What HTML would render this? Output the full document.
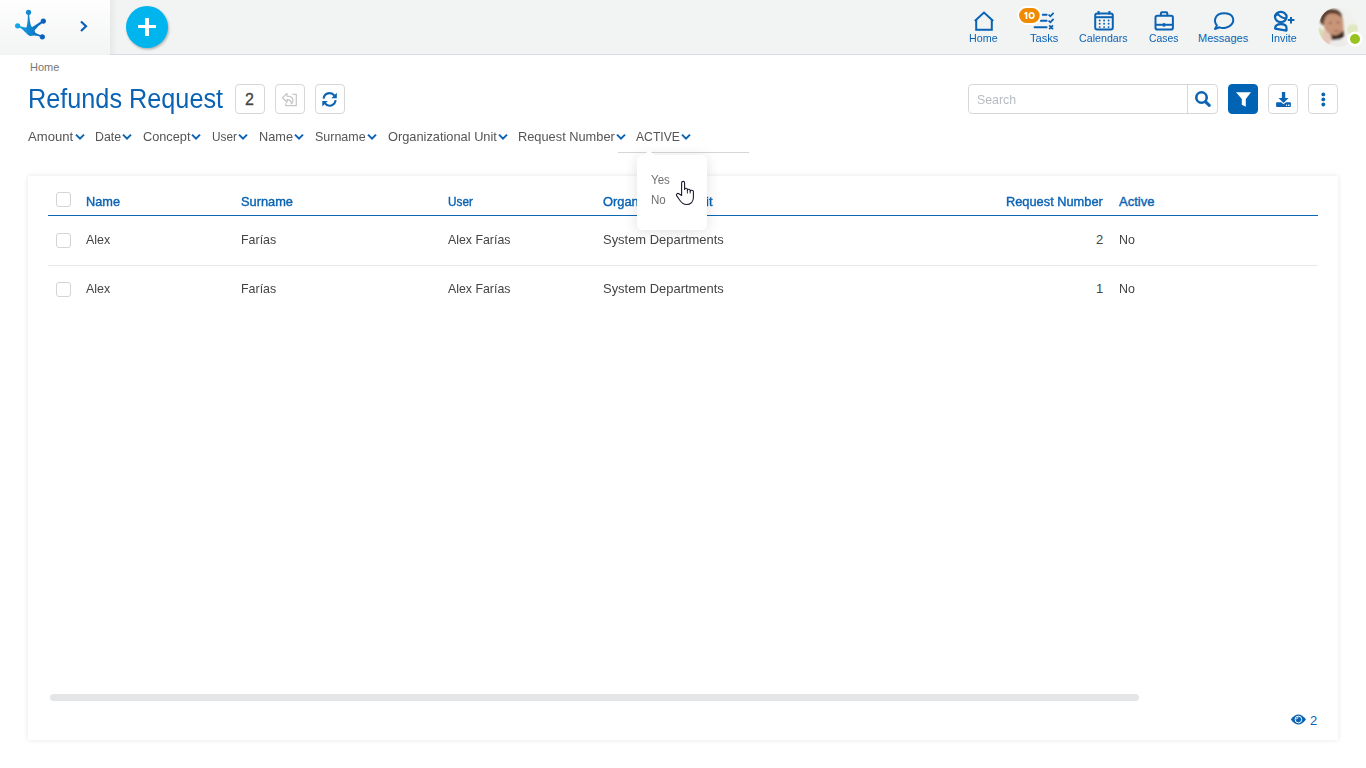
<!DOCTYPE html>
<html><head><meta charset="utf-8">
<style>
*{box-sizing:border-box;margin:0;padding:0}
html,body{width:1366px;height:768px;overflow:hidden;background:#fff;font-family:"Liberation Sans",sans-serif;color:#444}
.a{position:absolute;white-space:nowrap;line-height:1}
.s{display:inline-block;transform-origin:0 0}
#hdr{position:absolute;left:0;top:0;width:1366px;height:55px;background:#f2f3f3;border-bottom:1px solid #d8dce2}
#lp{position:absolute;left:0;top:0;width:110px;height:55px;background:linear-gradient(#fefefe,#f3f4f4)}
#lsh{position:absolute;left:110px;top:0;width:8px;height:54px;background:linear-gradient(to right,rgba(0,0,0,.045),rgba(0,0,0,0))}
#plus{position:absolute;left:126px;top:6px;width:42px;height:42px;border-radius:50%;background:#00b5ee;box-shadow:1px 1.5px 2.5px rgba(0,0,0,.28)}
.nl{font-size:11px;color:#0b63b4;top:33px}
.crumb{left:30px;top:62px;font-size:11px;color:#777}
.title{left:28px;top:86px;font-size:27px;color:#0b63b4}
.box{position:absolute;top:84px;width:30px;height:30px;border:1px solid #d6d7d9;border-radius:4px;background:#fff}
.f{top:130px;font-size:13px;color:#555}
.card{position:absolute;left:28px;top:176px;width:1310px;height:564px;background:#fff;box-shadow:0 0 5px rgba(0,0,0,.10)}
.th{top:195px;font-size:13px;color:#0b63b4;-webkit-text-stroke:.4px #0b63b4}
.td{font-size:13px;color:#444}
.cb{position:absolute;left:56px;width:15px;height:15px;border:1px solid #d3d4d6;border-radius:3px;background:#fff}
svg{position:absolute;left:0;top:0;overflow:visible}
</style></head><body>
<div id="hdr"></div>
<div id="lp"></div><div id="lsh"></div>
<div id="plus"></div>
<div style="position:absolute;left:138px;top:25px;width:18px;height:3px;background:#fff"></div>
<div style="position:absolute;left:145px;top:18px;width:4px;height:18px;background:#fff"></div>

<!-- header icons -->
<svg width="1366" height="55" viewBox="0 0 1366 55">
 <defs>
  <linearGradient id="lg" x1="16" y1="0" x2="45" y2="0" gradientUnits="userSpaceOnUse">
   <stop offset="0" stop-color="#15aae8"/><stop offset="1" stop-color="#0a5db6"/>
  </linearGradient>
 </defs>
 <g fill="url(#lg)" stroke="url(#lg)" stroke-linecap="round">
  <circle cx="28.5" cy="12.3" r="2.6" stroke="none"/>
  <circle cx="17.6" cy="25.8" r="2.6" stroke="none"/>
  <circle cx="43.3" cy="21.1" r="2.6" stroke="none"/>
  <circle cx="42.3" cy="36.8" r="2.6" stroke="none"/>
  <path d="M27.8 13 L29.2 13 Q29.4 22 31.5 27 L26.6 27 Q28 22 27.8 13Z" stroke="none"/>
  <path d="M17.4 24.9 Q22 27 26.5 27.8 L25 32 Q21 27.5 17.6 26.7Z" stroke="none"/>
  <path d="M42.8 20.2 L43.8 21.9 Q38 25.5 35 30 L31.5 27.5 Q37 24 42.8 20.2Z" stroke="none"/>
  <path d="M42.9 36 L41.7 37.6 Q38 35.2 33 35.5 L34.5 32.3 Q37.5 34.5 42.9 36Z" stroke="none"/>
  <path d="M23.6 29.6 Q26.5 27 29 25.8 Q32 26.5 34.8 28.7 Q34.2 31.2 35.6 34 Q33 36.2 30 35.9 Q26.2 34.6 23.6 29.6Z" stroke="none"/>
 </g>
 <polyline points="81,21.5 86,26.3 81,31" fill="none" stroke="#0b5fb8" stroke-width="2.2"/>

 <g fill="none" stroke="#0b63b4" stroke-width="2">
  <!-- home -->
  <polyline points="974.8,21 984,12.6 993.2,21" stroke-linejoin="miter"/>
  <path d="M976.2 20 V29.8 H991.8 V20"/>
  <!-- tasks -->
  <path d="M1042.6 14.8 H1046.6 M1040.6 20.8 H1046.6 M1034.6 27.3 H1046.6" stroke-linecap="round"/>
  <path d="M1048.6 14.6 L1050.4 16.3 L1053.6 12.8 M1048.6 20.6 L1050.4 22.3 L1053.6 18.8" stroke-width="1.8"/>
  <path d="M1049.2 25.3 L1053 29.1 M1053 25.3 L1049.2 29.1" stroke-width="1.8"/>
  <!-- calendar -->
  <rect x="1095.2" y="13.4" width="17.6" height="16.2" rx="2"/>
  <path d="M1095 17.2 H1113"/>
  <path d="M1098.6 11 V14.5 M1109.4 11 V14.5"/>
  <!-- cases -->
  <rect x="1155.5" y="15.8" width="17.4" height="13.8" rx="1.8"/>
  <path d="M1160.9 15.5 V13.3 Q1160.9 12.2 1162 12.2 H1166.2 Q1167.3 12.2 1167.3 13.3 V15.5"/>
  <path d="M1155 24.8 H1173"/>
  <!-- messages -->
  <path d="M1216.9 25.4 C1213.5 21.5 1214.3 13.3 1224.2 13.3 C1234 13.3 1235 21 1231 25 C1228.5 27.6 1223 28.8 1219.5 27.3 L1215 29 Z" stroke-linejoin="round"/>
  <!-- invite -->
  <ellipse cx="1280.8" cy="17" rx="5.8" ry="5.1" stroke-width="2.2"/>
  <path d="M1277.3 12.8 Q1279.2 17.2 1286.4 18.6" stroke-width="2"/>
  <path d="M1275 14.2 Q1276.5 12.5 1278 12.5 L1279 15.2 Q1276.5 15.5 1275.5 17 Z" fill="#0b63b4" stroke="none"/>
  <path d="M1275.1 28.6 C1275.1 25.3 1277.6 24.2 1281 24.2 C1284.5 24.2 1286.5 25.4 1286.5 28 V30.6 Z" stroke-width="2.2" stroke-linejoin="round"/>
  <path d="M1287.8 20 H1294.4 M1291 16.9 V23.6"/>
 </g>
 <g fill="#0b63b4">
  <circle cx="1099.7" cy="20.5" r="0.95"/><circle cx="1104.1" cy="20.5" r="0.95"/><circle cx="1108.6" cy="20.5" r="0.95"/>
  <circle cx="1099.7" cy="23.8" r="0.95"/><circle cx="1104.1" cy="23.8" r="0.95"/><circle cx="1108.6" cy="23.8" r="0.95"/>
  <circle cx="1099.7" cy="27.1" r="0.95"/><circle cx="1104.1" cy="27.1" r="0.95"/><circle cx="1108.6" cy="27.1" r="0.95"/>
  <rect x="1162.8" y="23.2" width="2.4" height="3.4"/>
  <path d="M1275 29 C1275 24.5 1286.5 24.5 1286.5 28 V30.5Z" fill="none"/>
 </g>
 <!-- badge -->
 <rect x="1018.1" y="7.1" width="22.6" height="16.8" rx="8.4" fill="#f08a00" stroke="#fff" stroke-width="2"/>
 <!-- avatar -->
 <defs>
  <clipPath id="avc"><circle cx="1338.2" cy="27" r="19.8"/></clipPath>
  <filter id="bl" x="-20%" y="-20%" width="140%" height="140%"><feGaussianBlur stdDeviation="1"/></filter>
 </defs>
 <g clip-path="url(#avc)">
  <rect x="1316" y="5" width="45" height="45" fill="#f1f2ef"/>
  <g filter="url(#bl)">
   <ellipse cx="1353" cy="30" rx="6" ry="6" fill="#dfe8bf"/>
   <ellipse cx="1320" cy="35" rx="4" ry="7" fill="#d5e2b0"/>
   <path d="M1320 22 Q1320 9 1332 9 Q1341 9 1342 17 L1343 22 Q1338 15 1330 16 Q1325 17 1323.5 26 Z" fill="#5a3e2e"/>
   <path d="M1324 22 Q1325 13 1333 13.5 Q1341 14 1343 21 Q1344.5 30 1342 35 Q1337 39 1331 37 Q1325 33 1324 26Z" fill="#c99579"/>
   <path d="M1327.5 31 Q1331 36 1337 35 Q1341 33.5 1343.5 30 L1344 36 Q1340 41 1334 41 Q1329 39.5 1327 35Z" fill="#3a2a22"/>
   <ellipse cx="1336.5" cy="31" rx="3" ry="1.3" fill="#b07a66"/>
   <path d="M1322 31 Q1327 29 1331 35 L1333 45 Q1327 47 1323 42Z" fill="#e6c6b7"/>
   <path d="M1330 41 Q1338 38 1346 40 L1349 48 L1330 48Z" fill="#ecebea"/>
   <circle cx="1330.5" cy="23" r="1" fill="#5a4035"/><circle cx="1338" cy="22.5" r="1" fill="#5a4035"/>
  </g>
 </g>
 <circle cx="1355" cy="39" r="7.6" fill="#fff"/>
 <circle cx="1355" cy="39" r="5" fill="#97c21f"/>
</svg>
<svg width="1366" height="55"><g fill="none" stroke="#fff" stroke-width="1.7"><path d="M1026.5 12.1 V19"/><path d="M1024.3 14 L1026.6 12.4" stroke-width="1.3"/><ellipse cx="1031.6" cy="15.5" rx="2.25" ry="2.75"/></g></svg>

<div class="a nl" style="left:969px"><span class="s" style="transform:scaleX(.976)">Home</span></div>
<div class="a nl" style="left:1030px"><span class="s" style="transform:scaleX(1.01)">Tasks</span></div>
<div class="a nl" style="left:1079px"><span class="s" style="transform:scaleX(.97)">Calendars</span></div>
<div class="a nl" style="left:1149px"><span class="s" style="transform:scaleX(.945)">Cases</span></div>
<div class="a nl" style="left:1198px"><span class="s" style="transform:scaleX(1.0)">Messages</span></div>
<div class="a nl" style="left:1271px"><span class="s" style="transform:scaleX(.98)">Invite</span></div>

<div class="a crumb">Home</div>
<div class="a title"><span class="s" style="transform:scaleX(.935)">Refunds Request</span></div>
<div class="box" style="left:235px"></div>
<div class="box" style="left:275px"></div>
<div class="box" style="left:315px"></div>
<div class="a" style="left:245px;top:92px;font-size:16px;color:#444;-webkit-text-stroke:.3px #444">2</div>

<!-- search -->
<div class="box" style="left:968px;width:250px;border-radius:4px"></div>
<div style="position:absolute;left:1187px;top:85px;width:1px;height:28px;background:#d6d7d9"></div>
<div class="a" style="left:977px;top:93px;font-size:13px;color:#b8bcc2"><span class="s" style="transform:scaleX(.95)">Search</span></div>
<div class="box" style="left:1228px;background:#0063b4;border-color:#0063b4"></div>
<div class="box" style="left:1268px"></div>
<div class="box" style="left:1308px"></div>

<svg width="1366" height="768">
 <g fill="none" stroke="#0b63b4" stroke-width="2.2">
  <circle cx="1201.5" cy="97.5" r="5.2" stroke-width="2.6"/>
  <path d="M1205.6 101.8 L1209.3 105.3" stroke-width="3.1" stroke-linecap="round"/>
 </g>
 <path d="M1236 92.2 H1251 L1245.8 99 V106.7 L1241.8 104.8 V99 Z" fill="#fff"/>
 <g fill="#0b63b4">
  <path d="M1281.9 92 H1285.2 V98.1 H1288.6 L1283.55 103.1 L1278.5 98.1 H1281.9 Z"/>
  <path d="M1277 102.2 H1281.1 L1283.55 104.3 L1286 102.2 H1290 Q1290.9 102.2 1290.9 103.1 V106 Q1290.9 106.9 1290 106.9 H1277 Q1276.1 106.9 1276.1 106 V103.1 Q1276.1 102.2 1277 102.2 Z"/>
  <circle cx="1323.3" cy="94.4" r="1.9"/><circle cx="1323.3" cy="99.4" r="1.9"/><circle cx="1323.3" cy="104.5" r="1.9"/>
 </g>
 <circle cx="1286.5" cy="105.3" r=".7" fill="#fff"/><ellipse cx="1288.8" cy="105.3" rx=".95" ry=".7" fill="#fff"/>
 <!-- reply icon disabled -->
 <g fill="none" stroke="#c6c7c9" stroke-width="1.25" stroke-linejoin="round">
  <path d="M282.4 97.8 L287 93.4 V96.2 C290.5 96.2 293 97.5 293 100.5 C293 102 292.3 103 291.3 103.8 C291.6 101.2 290 99.7 287 99.7 V102.3 Z"/>
  <path d="M292.3 94.3 H296.3 V105.5 H285.8 V103.3"/>
 </g>
 <!-- refresh -->
 <g fill="none" stroke="#0b63b4" stroke-width="2.1">
  <path d="M323.6 98.6 A6 6 0 0 1 334.4 95.6"/>
  <path d="M335.6 100.2 A6 6 0 0 1 324.8 103.2"/>
 </g>
 <g fill="#0b63b4">
  <path d="M336.8 92.8 V98.3 H331.3Z"/>
  <path d="M322.3 106.4 V100.9 H327.8Z"/>
 </g>
</svg>

<!-- filters -->
<div class="a f" style="left:28px"><span class="s" style="transform:scaleX(1.01)">Amount</span></div>
<div class="a f" style="left:95px"><span class="s" style="transform:scaleX(.95)">Date</span></div>
<div class="a f" style="left:143px"><span class="s" style="transform:scaleX(.98)">Concept</span></div>
<div class="a f" style="left:212px"><span class="s" style="transform:scaleX(.91)">User</span></div>
<div class="a f" style="left:259px"><span class="s" style="transform:scaleX(.98)">Name</span></div>
<div class="a f" style="left:315px"><span class="s" style="transform:scaleX(.96)">Surname</span></div>
<div class="a f" style="left:388px"><span class="s" style="transform:scaleX(.985)">Organizational Unit</span></div>
<div class="a f" style="left:518px"><span class="s" style="transform:scaleX(.985)">Request Number</span></div>
<div class="a f" style="left:636px"><span class="s" style="transform:scaleX(.935)">ACTIVE</span></div>
<svg width="1366" height="768">
 <g fill="none" stroke="#0b63b4" stroke-width="2">
  <polyline points="76,134.6 80,138.6 84,134.6"/>
  <polyline points="123,134.6 127,138.6 131,134.6"/>
  <polyline points="192,134.6 196,138.6 200,134.6"/>
  <polyline points="239,134.6 243,138.6 247,134.6"/>
  <polyline points="295,134.6 299,138.6 303,134.6"/>
  <polyline points="368,134.6 372,138.6 376,134.6"/>
  <polyline points="499,134.6 503,138.6 507,134.6"/>
  <polyline points="617,134.6 621,138.6 625,134.6"/>
  <polyline points="682,134.6 686,138.6 690,134.6"/>
 </g>
</svg>
<div style="position:absolute;left:618px;top:152px;width:131px;height:1px;background:#d5d6d8"></div>

<div class="card"></div>
<div style="position:absolute;left:48px;top:215px;width:1270px;height:1px;background:#0b66b4"></div>
<div style="position:absolute;left:48px;top:265px;width:1270px;height:1px;background:#e8e8e8"></div>
<div class="cb" style="top:192px"></div>
<div class="cb" style="top:233px"></div>
<div class="cb" style="top:282px"></div>
<div class="a th" style="left:86px"><span class="s" style="transform:scaleX(.98)">Name</span></div>
<div class="a th" style="left:241px"><span class="s" style="transform:scaleX(.985)">Surname</span></div>
<div class="a th" style="left:448px"><span class="s" style="transform:scaleX(.905)">User</span></div>
<div class="a th" style="left:603px"><span class="s" style="transform:scaleX(.99)">Organizational Unit</span></div>
<div class="a th" style="left:1006px"><span class="s" style="transform:scaleX(.985)">Request Number</span></div>
<div class="a th" style="left:1119px"><span class="s" style="transform:scaleX(1)">Active</span></div>

<div class="a td" style="left:86px;top:233px"><span class="s" style="transform:scaleX(.96)">Alex</span></div>
<div class="a td" style="left:241px;top:233px"><span class="s" style="transform:scaleX(.956)">Farías</span></div>
<div class="a td" style="left:448px;top:233px"><span class="s" style="transform:scaleX(.95)">Alex Farías</span></div>
<div class="a td" style="left:603px;top:233px"><span class="s" style="transform:scaleX(.995)">System Departments</span></div>
<div class="a td" style="left:1096px;top:233px">2</div>
<div class="a td" style="left:1119px;top:233px"><span class="s" style="transform:scaleX(.96)">No</span></div>
<div class="a td" style="left:86px;top:282px"><span class="s" style="transform:scaleX(.96)">Alex</span></div>
<div class="a td" style="left:241px;top:282px"><span class="s" style="transform:scaleX(.956)">Farías</span></div>
<div class="a td" style="left:448px;top:282px"><span class="s" style="transform:scaleX(.95)">Alex Farías</span></div>
<div class="a td" style="left:603px;top:282px"><span class="s" style="transform:scaleX(.995)">System Departments</span></div>
<div class="a td" style="left:1096px;top:282px">1</div>
<div class="a td" style="left:1119px;top:282px"><span class="s" style="transform:scaleX(.96)">No</span></div>

<div style="position:absolute;left:50px;top:694px;width:1089px;height:7px;border-radius:3.5px;background:#e4e5e7"></div>
<svg width="1366" height="768">
 <path d="M1290.8 719.5 Q1298.4 709.5 1306 719.5 Q1298.4 729.5 1290.8 719.5Z" fill="#0b63b4"/>
 <circle cx="1298.4" cy="719.5" r="3.3" fill="none" stroke="#fff" stroke-width="1"/>
 <circle cx="1298.4" cy="719.5" r="2.2" fill="#0b63b4"/>
 <path d="M1296.6 719.3 A1.9 1.9 0 0 1 1298.3 717.6" stroke="#fff" stroke-width="0.9" fill="none"/>
</svg>
<div class="a" style="left:1310px;top:714px;font-size:13px;color:#0b63b4">2</div>

<!-- dropdown -->
<div style="position:absolute;left:637px;top:155px;width:70px;height:75px;background:#fff;border-radius:5px;box-shadow:0 2px 14px rgba(0,0,0,.12)"></div>
<svg width="1366" height="768"><path d="M643 155.5 L649 150.5 L655 155.5Z" fill="#fff"/></svg>
<div class="a" style="left:651px;top:174px;font-size:12px;color:#707070"><span class="s" style="transform:scaleX(.96)">Yes</span></div>
<div class="a" style="left:651px;top:194px;font-size:12px;color:#707070"><span class="s" style="transform:scaleX(.96)">No</span></div>
<!-- cursor -->
<svg width="1366" height="768">
 <path d="M681.6 195.5 V183 C681.6 180.8 684.6 180.8 684.6 183 V189.5 C684.6 187.8 687.4 187.8 687.4 189.6 V190.5 C687.4 188.9 690.2 188.9 690.2 190.7 V191.2 C690.2 189.8 693.4 189.8 693.4 191.6 V197.5 C693.4 201.5 690.8 204.5 686.5 204.5 C683.5 204.5 681.8 203 680 200.5 L676.6 195.6 C675.9 194.4 677.5 192.6 679 193.8 Z" fill="#fff" stroke="#1a1a2a" stroke-width="1.1" stroke-linejoin="round"/>
 <path d="M687.4 190.5 V193.5 M690.2 191 V193.5" stroke="#1a1a2a" stroke-width="0.9"/>
</svg>
</body></html>
